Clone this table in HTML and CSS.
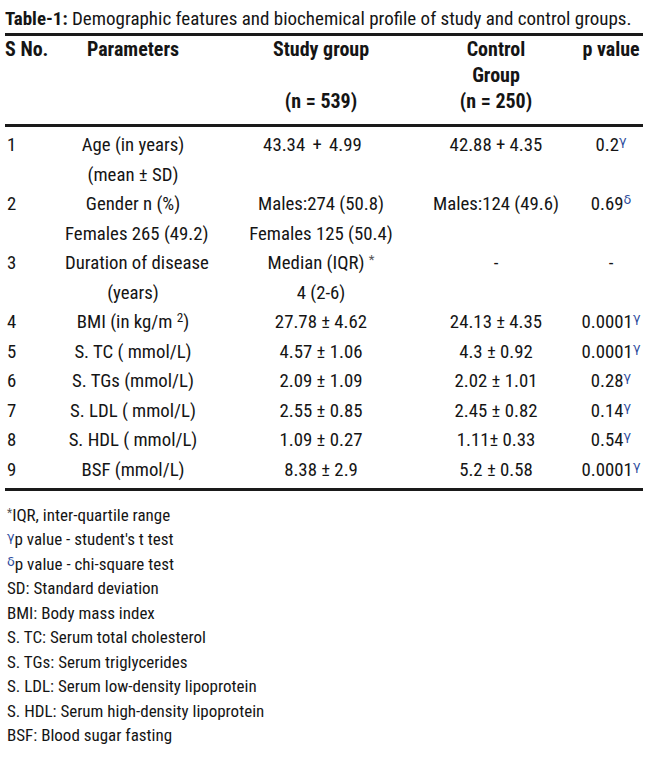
FILE: index.html
```html
<!DOCTYPE html>
<html lang="en">
<head>
<meta charset="utf-8">
<title>Table-1</title>
<link rel="stylesheet" href="styles.css">
</head>
<body>
<div class="page">
  <p class="caption"><b>Table-1:</b> Demographic features and biochemical profile of study and control groups.</p>
  <div class="table">
    <div class="thead">
      <div class="c1">S No.</div>
      <div class="c2">Parameters</div>
      <div class="c3 split"><span>Study group</span><span>(n = 539)</span></div>
      <div class="c4">Control<br>Group<br>(n = 250)</div>
      <div class="c5">p value</div>
    </div>
    <div class="tbody">
      <div class="c1">1</div>
      <div class="c2">Age (in years)<br>(mean ± SD)</div>
      <div class="c3 shift">43.34 + 4.99</div>
      <div class="c4">42.88 + 4.35</div>
      <div class="c5">0.2<sup class="sym">γ</sup></div>

      <div class="c1">2</div>
      <div class="c2">Gender n (%)<br>Females 265 (49.2)</div>
      <div class="c3">Males:274 (50.8)<br>Females 125 (50.4)</div>
      <div class="c4">Males:124 (49.6)</div>
      <div class="c5">0.69<sup class="sym">δ</sup></div>

      <div class="c1">3</div>
      <div class="c2">Duration of disease<br>(years)</div>
      <div class="c3">Median (IQR) <sup class="ast">*</sup><br>4 (2-6)</div>
      <div class="c4">-</div>
      <div class="c5">-</div>

      <div class="c1">4</div>
      <div class="c2">BMI (in kg/m <sup class="pow">2</sup>)</div>
      <div class="c3">27.78 ± 4.62</div>
      <div class="c4">24.13 ± 4.35</div>
      <div class="c5">0.0001<sup class="sym">γ</sup></div>

      <div class="c1">5</div>
      <div class="c2">S. TC ( mmol/L)</div>
      <div class="c3">4.57 ± 1.06</div>
      <div class="c4">4.3 ± 0.92</div>
      <div class="c5">0.0001<sup class="sym">γ</sup></div>

      <div class="c1">6</div>
      <div class="c2">S. TGs (mmol/L)</div>
      <div class="c3">2.09 ± 1.09</div>
      <div class="c4">2.02 ± 1.01</div>
      <div class="c5">0.28<sup class="sym">γ</sup></div>

      <div class="c1">7</div>
      <div class="c2">S. LDL ( mmol/L)</div>
      <div class="c3">2.55 ± 0.85</div>
      <div class="c4">2.45 ± 0.82</div>
      <div class="c5">0.14<sup class="sym">γ</sup></div>

      <div class="c1">8</div>
      <div class="c2">S. HDL ( mmol/L)</div>
      <div class="c3">1.09 ± 0.27</div>
      <div class="c4">1.11± 0.33</div>
      <div class="c5">0.54<sup class="sym">γ</sup></div>

      <div class="c1">9</div>
      <div class="c2">BSF (mmol/L)</div>
      <div class="c3">8.38 ± 2.9</div>
      <div class="c4">5.2 ± 0.58</div>
      <div class="c5">0.0001<sup class="sym">γ</sup></div>
    </div>
  </div>
  <ul class="notes">
    <li><sup class="ast">*</sup>IQR, inter-quartile range</li>
    <li><sup class="sym">γ</sup>p value - student's t test</li>
    <li><sup class="sym">δ</sup>p value - chi-square test</li>
    <li>SD: Standard deviation</li>
    <li>BMI: Body mass index</li>
    <li>S. TC: Serum total cholesterol</li>
    <li>S. TGs: Serum triglycerides</li>
    <li>S. LDL: Serum low-density lipoprotein</li>
    <li>S. HDL: Serum high-density lipoprotein</li>
    <li>BSF: Blood sugar fasting</li>
  </ul>
</div>
</body>
</html>
```
FILE: styles.css
```css
html, body {
  margin: 0;
  background: #ffffff;
}

body {
  color: #151515;
  font-family: "Roboto Condensed", "Open Sans", "Liberation Sans", sans-serif;
}

.page {
  width: 638px;
  padding: 4px 7px 0 5px;
}

.caption {
  margin: 0;
  font-size: 19px;
  line-height: 29px;
  white-space: nowrap;
}

.caption b {
  font-weight: 700;
}

.table {
  border-top: 3px solid #1a1a1a;
  border-bottom: 3px solid #1a1a1a;
}

.thead,
.tbody {
  display: grid;
  grid-template-columns: 60px 136px 229px 132px 81px;
}

.thead {
  font-weight: 700;
  font-size: 20px;
  line-height: 26px;
  padding-bottom: 9.5px;
  border-bottom: 3px solid #1a1a1a;
}

.tbody {
  font-size: 18.8px;
  line-height: 29.5px;
  padding: 4.75px 0 2.25px;
}

.c1 {
  white-space: nowrap;
}

.tbody .c1 {
  padding-left: 2px;
}

.c2,
.c3,
.c4,
.c5 {
  text-align: center;
  white-space: nowrap;
}

.c3 {
  padding-left: 11px;
}

.c3.shift {
  padding-left: 0;
  padding-right: 6px;
  word-spacing: 3px;
}

.c5 {
  padding-left: 17px;
}

.split {
  display: flex;
  flex-direction: column;
  justify-content: space-between;
}

sup {
  line-height: 0;
}

.sym {
  font-family: "DejaVu Sans", sans-serif;
  font-size: 0.68em;
  color: #2a4a9c;
  vertical-align: 0.5em;
}

.notes .sym {
  font-size: 0.75em;
  vertical-align: 0.3em;
}

.ast {
  font-size: 0.7em;
  color: #555;
  vertical-align: 0.35em;
}

.pow {
  font-size: 0.7em;
  vertical-align: 0.45em;
}

.notes {
  list-style: none;
  margin: 12.25px 0 0;
  padding: 0 0 0 2px;
  font-size: 17px;
  line-height: 24.5px;
}

.notes li {
  white-space: nowrap;
}
```
